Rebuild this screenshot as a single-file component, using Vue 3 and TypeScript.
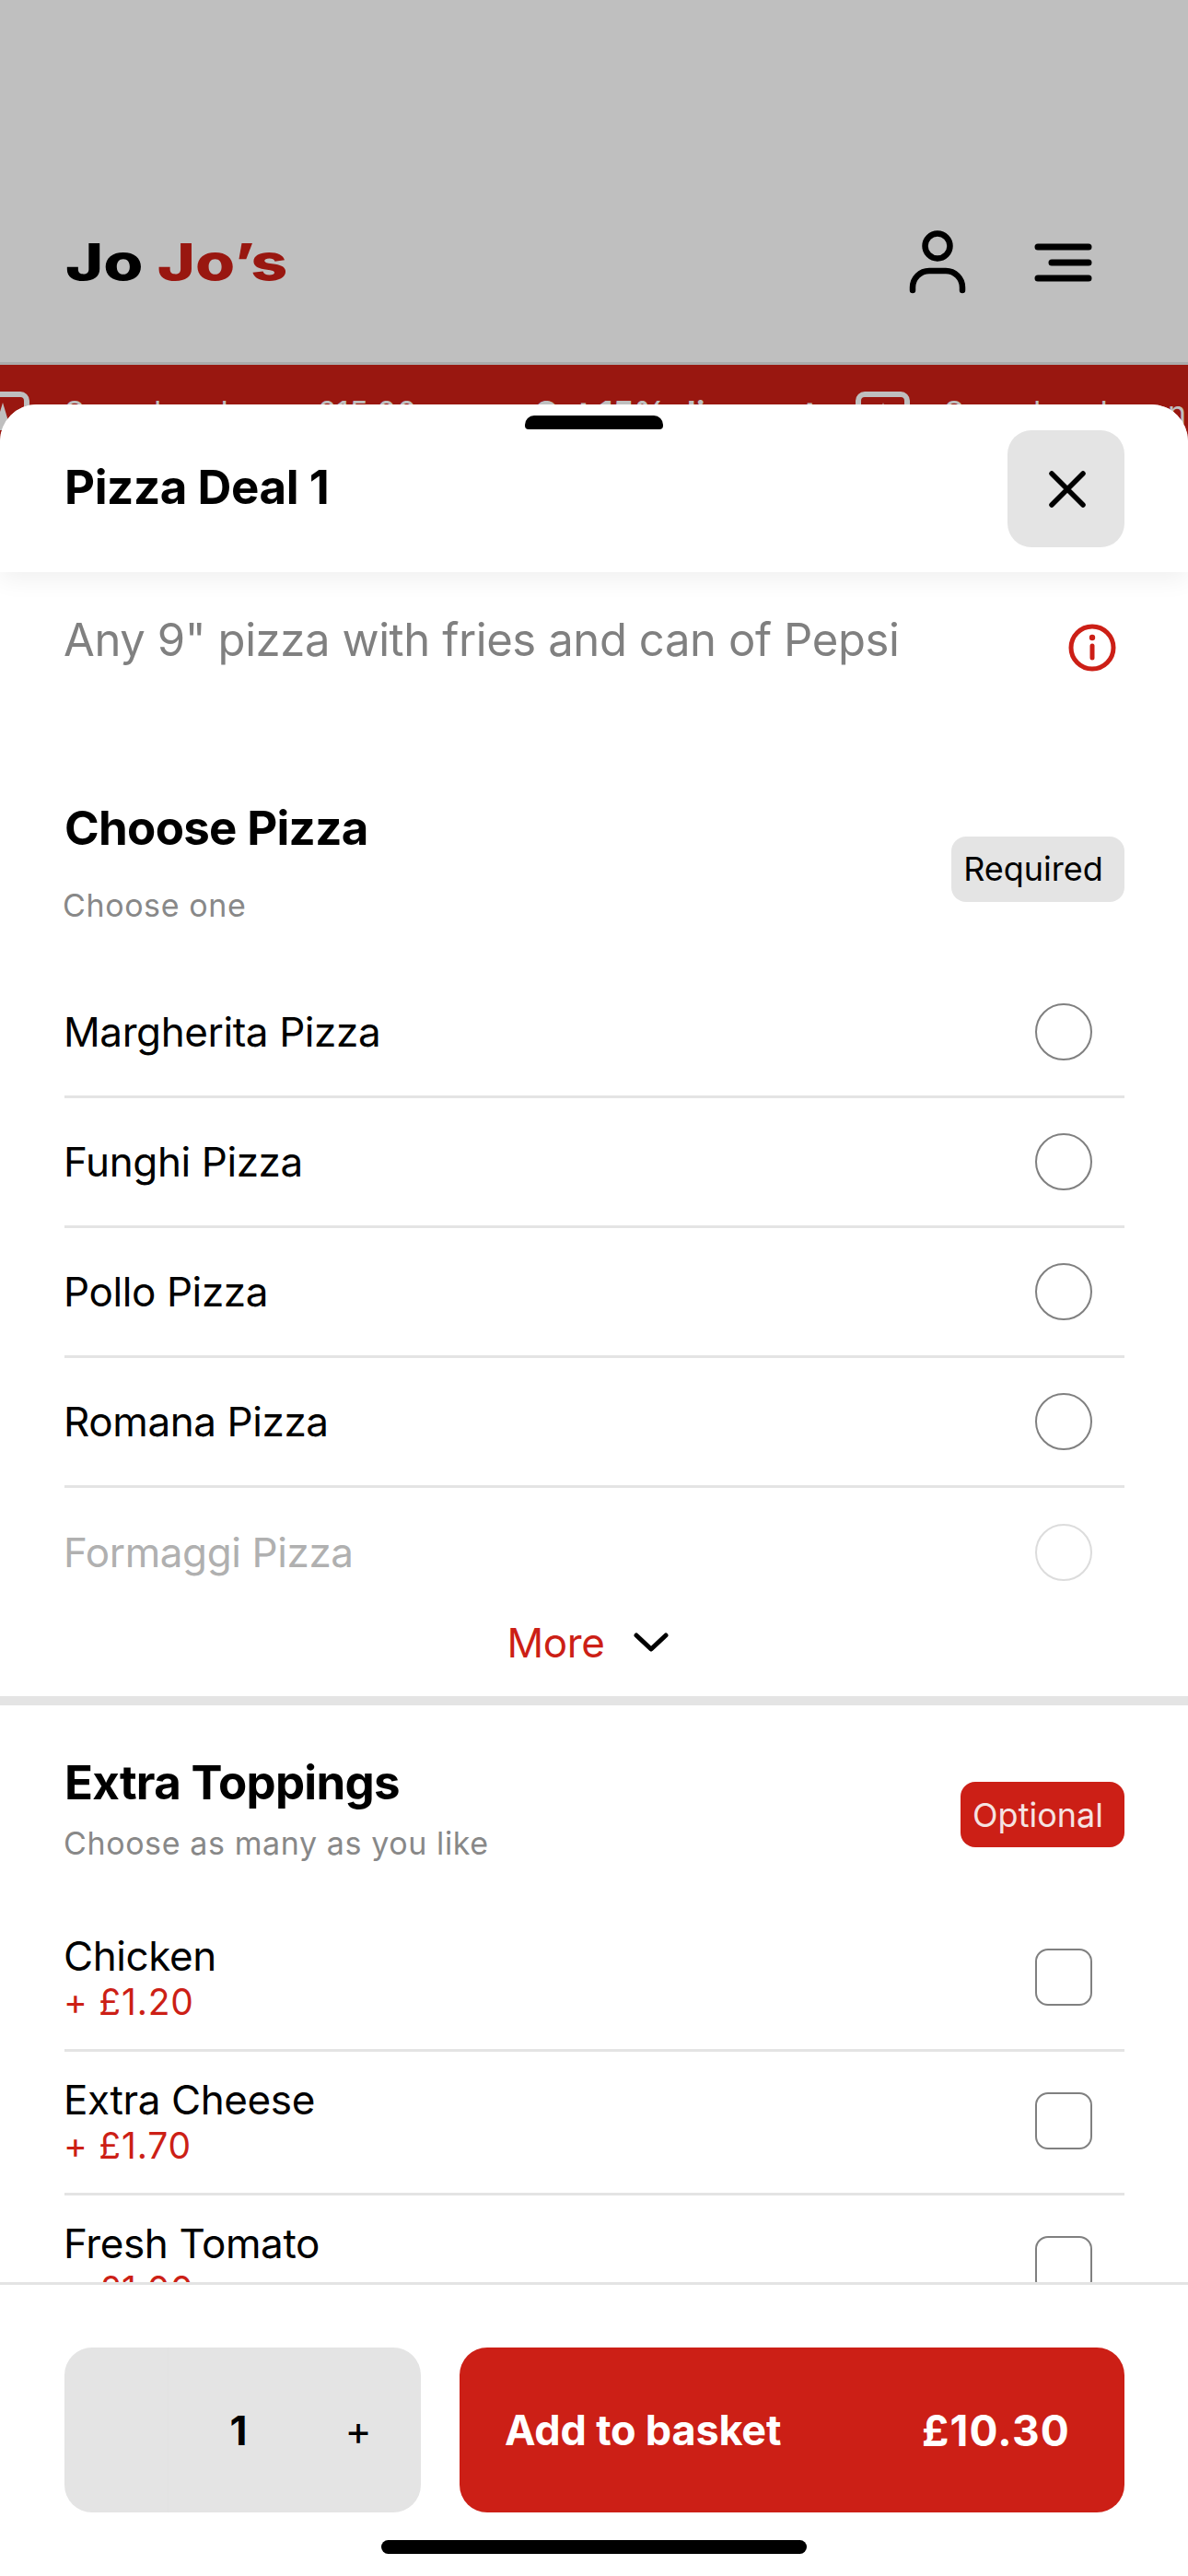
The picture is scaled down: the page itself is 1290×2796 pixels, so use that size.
<script setup lang="ts">
interface Option {
  name: string;
  price?: string;
}

const pizzas: Option[] = [
  { name: 'Margherita Pizza' },
  { name: 'Funghi Pizza' },
  { name: 'Pollo Pizza' },
  { name: 'Romana Pizza' },
];

const toppings: Option[] = [
  { name: 'Chicken', price: '+ £1.20' },
  { name: 'Extra Cheese', price: '+ £1.70' },
  { name: 'Fresh Tomato', price: '+ £1.00' },
];
</script>

<template>
  <div class="screen">
    <header class="topbar">
      <div class="logo"><span>Jo</span> <span class="logo-red">Jo’s</span></div>
      <div class="topbar-icons">
        <svg class="icon-person" viewBox="0 0 62 70" fill="none" stroke="#000" stroke-width="6.5" stroke-linecap="round">
          <circle cx="31" cy="17" r="13.5" />
          <path d="M4 65v-3a18 18 0 0 1 18-18h18a18 18 0 0 1 18 18v3" />
        </svg>
        <svg class="icon-menu" viewBox="0 0 66 44" fill="none" stroke="#000" stroke-width="7" stroke-linecap="round">
          <path d="M5 5h55M20 22h40M5 39h55" />
        </svg>
      </div>
    </header>

    <div class="banner">
      <div class="banner-box banner-box-first">
        <svg width="30" height="30" viewBox="0 0 30 30" fill="#fff"><path d="M15 0l9 30H6z" /></svg>
      </div>
      <span class="banner-text">Spend under on £15.00</span>
      <span class="banner-text banner-bold">Get 15% discount</span>
      <div class="banner-box">
        <svg width="30" height="30" viewBox="0 0 30 30" fill="#fff"><path d="M15 0l9 30H6z" /></svg>
      </div>
      <span class="banner-text">Spend under on £15.00</span>
    </div>

    <div class="dim"></div>

    <section class="sheet">
      <div class="handle"></div>
      <div class="sheet-head">
        <h1 class="sheet-title">Pizza Deal 1</h1>
        <button class="close-btn">
          <svg width="46" height="46" viewBox="0 0 46 46" fill="none" stroke="#000" stroke-width="5.5" stroke-linecap="round">
            <path d="M6 6l34 34M40 6L6 40" />
          </svg>
        </button>
      </div>

      <div class="sheet-body">
        <div class="desc">
          <p class="desc-text">Any 9" pizza with fries and can of Pepsi</p>
          <svg class="info" viewBox="0 0 52 52" fill="none" stroke="#cc1f16" stroke-width="5">
            <circle cx="26" cy="26" r="23" />
            <path d="M26 24v13" stroke-width="5" stroke-linecap="round" />
            <circle cx="26" cy="15" r="3.2" fill="#cc1f16" stroke="none" />
          </svg>
        </div>

        <div class="group-head group-head-pizza">
          <div>
            <h2 class="group-title">Choose Pizza</h2>
            <div class="group-sub sub-pizza">Choose one</div>
          </div>
          <span class="tag tag-grey">Required</span>
        </div>

        <div v-for="p in pizzas" :key="p.name" class="row">
          <span class="row-name">{{ p.name }}</span>
          <span class="radio"></span>
        </div>
        <div class="row row-faded">
          <span class="row-name">Formaggi Pizza</span>
          <span class="radio"></span>
        </div>

        <div class="more">
          <span class="more-label">More</span>
          <svg width="42" height="26" viewBox="0 0 42 26" fill="none" stroke="#000" stroke-width="5" stroke-linecap="round" stroke-linejoin="round">
            <path d="M5 5l16 15L37 5" />
          </svg>
        </div>

        <div class="group-rule"></div>

        <div class="group-head group-head-extra">
          <div>
            <h2 class="group-title">Extra Toppings</h2>
            <div class="group-sub sub-extra">Choose as many as you like</div>
          </div>
          <span class="tag tag-red">Optional</span>
        </div>

        <div v-for="t in toppings" :key="t.name" class="row row-priced">
          <div>
            <div class="row-name">{{ t.name }}</div>
            <div class="row-price">{{ t.price }}</div>
          </div>
          <span class="check"></span>
        </div>
      </div>

      <footer class="sheet-foot">
        <div class="stepper">
          <button class="step-cell step-minus"></button>
          <span class="step-count">1</span>
          <button class="step-cell step-plus">+</button>
        </div>
        <button class="add-btn">
          <span>Add to basket</span>
          <span class="add-price">£10.30</span>
        </button>
      </footer>
      <div class="home-bar"></div>
    </section>
  </div>
</template>

<style scoped>
.screen {
  position: relative;
  width: 1290px;
  height: 2796px;
  overflow: hidden;
  background: #fff;
  font-family: Inter, "Liberation Sans", sans-serif;
  color: #000;
}

.topbar {
  display: flex;
  align-items: center;
  justify-content: space-between;
  height: 396px;
  box-sizing: border-box;
  padding: 176px 102px 0 71px;
  border-bottom: 3px solid #e4e4e4;
  background: #fff;
}

.logo {
  font-family: Inter, "Liberation Sans", sans-serif;
  font-weight: 800;
  font-size: 55px;
  line-height: 1;
  white-space: nowrap;
  transform: scaleX(1.27);
  transform-origin: left center;
}

.logo-red {
  color: #cc1f16;
}

.topbar-icons {
  display: flex;
  align-items: center;
  gap: 73px;
}

.icon-person {
  width: 62px;
  height: 70px;
  overflow: visible;
}

.icon-menu {
  width: 66px;
  height: 44px;
}

.banner {
  display: flex;
  align-items: flex-start;
  height: 120px;
  padding-top: 29px;
  background: #cc1f16;
  color: #fff;
  white-space: nowrap;
  overflow: hidden;
}

.banner-box {
  flex: none;
  display: flex;
  justify-content: center;
  padding-top: 6px;
  box-sizing: border-box;
  width: 59px;
  height: 60px;
  border: 6px solid #fff;
  border-radius: 10px;
  margin-left: 39px;
  margin-right: 37px;
}

.banner-box-first {
  margin-left: -27px;
  margin-right: 38px;
}

.banner-text {
  flex: none;
  font-size: 34px;
  line-height: 56px;
  width: 372px;
  margin-top: -5px;
  letter-spacing: 0.5px;
}

.banner-bold {
  font-size: 35px;
  font-weight: 700;
  margin-left: 138px;
  width: 310px;
}

.dim {
  position: absolute;
  inset: 0;
  background: rgba(0, 0, 0, 0.25);
}

.sheet {
  position: absolute;
  left: 0;
  right: 0;
  top: 439px;
  bottom: 0;
  display: flex;
  flex-direction: column;
  background: #fff;
  border-radius: 40px 40px 0 0;
  overflow: hidden;
}

.handle {
  position: absolute;
  z-index: 3;
  left: 570px;
  top: 12px;
  width: 150px;
  height: 15px;
  background: #000;
  border-radius: 10px 10px 4px 4px;
}

.sheet-head {
  position: relative;
  z-index: 2;
  flex: none;
  display: flex;
  align-items: center;
  justify-content: space-between;
  height: 182px;
  box-sizing: border-box;
  padding: 28px 69px 27px 70px;
  background: #fff;
  box-shadow: 0 6px 26px rgba(0, 0, 0, 0.07);
}

.sheet-title {
  margin: -3px 0 0;
  font-size: 51px;
  line-height: 60px;
  font-weight: 700;
  letter-spacing: -0.4px;
}

.close-btn {
  display: flex;
  align-items: center;
  justify-content: center;
  width: 127px;
  height: 127px;
  padding: 0 0 0 3px;
  border: none;
  border-radius: 26px;
  background: #e4e4e4;
}

.sheet-body {
  flex: 1;
  min-height: 0;
  overflow: hidden;
}

.desc {
  display: flex;
  justify-content: space-between;
  padding: 44px 78px 0 70px;
  height: 176px;
  box-sizing: border-box;
}

.desc-text {
  margin: 0 0 0 -1px;
  font-size: 49px;
  line-height: 60px;
  letter-spacing: -0.4px;
  color: #808080;
}

.info {
  width: 52px;
  height: 52px;
  margin-top: 12px;
}

.group-head {
  display: flex;
  justify-content: space-between;
  align-items: center;
  box-sizing: border-box;
  padding: 0 69px 0 70px;
}

.group-head-pizza {
  height: 254px;
  padding-top: 26px;
}

.group-head-pizza .tag {
  margin-top: 12px;
}

.group-head-extra {
  height: 220px;
  padding-top: 5px;
}

.group-head-extra .tag {
  margin-top: 12px;
}

.group-title {
  margin: 0;
  font-size: 51px;
  line-height: 60px;
  font-weight: 700;
  letter-spacing: -0.7px;
}

.group-sub {
  font-size: 34px;
  line-height: 44px;
  color: #888;
  letter-spacing: 0.6px;
}

.sub-pizza {
  margin-top: 32px;
  margin-left: -2px;
}

.sub-extra {
  margin-top: 14px;
  margin-left: -1px;
}

.tag {
  display: flex;
  align-items: center;
  justify-content: center;
  box-sizing: border-box;
  height: 71px;
  padding-right: 10px;
  border-radius: 16px;
  font-size: 36px;
}

.tag-grey {
  width: 188px;
  background: #e4e4e4;
}

.tag-red {
  width: 178px;
  background: #cc1f16;
  color: #f5e3e2;
}

.row {
  display: flex;
  align-items: center;
  justify-content: space-between;
  height: 141px;
  box-sizing: border-box;
  margin: 0 69px 0 70px;
  padding-right: 35px;
  border-bottom: 3px solid #e4e4e4;
}

.row-name {
  margin-left: -1px;
  font-size: 44px;
  line-height: 52px;
  letter-spacing: -0.4px;
}

.radio {
  flex: none;
  box-sizing: border-box;
  width: 62px;
  height: 62px;
  border: 2px solid #808080;
  border-radius: 50%;
}

.row-faded {
  border-bottom: none;
  height: 140px;
}

.row-faded .row-name {
  color: #b0b0b0;
}

.row-faded .radio {
  border-color: #dcdcdc;
}

.more {
  display: flex;
  align-items: center;
  justify-content: center;
  gap: 29px;
  height: 84px;
  margin-top: -14px;
  margin-left: -12px;
}

.more-label {
  font-size: 44px;
  line-height: 56px;
  letter-spacing: -0.4px;
  color: #cc1f16;
}

.group-rule {
  height: 10px;
  margin-top: 16px;
  background: #e4e4e4;
}

.row-priced {
  height: 156px;
}

.row-priced .row-name {
  display: block;
  line-height: 50px;
}

.row-price {
  margin-left: -1px;
  font-size: 39px;
  line-height: 50px;
  color: #cc1f16;
  letter-spacing: 0.8px;
}

.check {
  flex: none;
  box-sizing: border-box;
  width: 62px;
  height: 62px;
  margin-top: -4px;
  border: 2px solid #808080;
  border-radius: 14px;
  background: #fff;
}

.sheet-foot {
  position: relative;
  flex: none;
  display: flex;
  gap: 42px;
  height: 319px;
  box-sizing: border-box;
  padding: 68px 69px 0 70px;
  border-top: 3px solid #e4e4e4;
  background: #fff;
}

.stepper {
  display: flex;
  align-items: center;
  width: 387px;
  height: 179px;
  border-radius: 30px;
  background: #e4e4e4;
  overflow: hidden;
}

.step-cell {
  padding: 0;
  border: none;
  background: none;
  color: #000;
  font-family: inherit;
}

.step-minus {
  width: 113px;
  height: 100%;
  border-right: 1px solid #e2e2e2;
}

.step-count {
  width: 126px;
  margin-left: 13px;
  text-align: center;
  font-size: 44px;
  font-weight: 700;
}

.step-plus {
  width: 50px;
  margin-left: 42px;
  font-size: 44px;
  line-height: 50px;
  text-align: center;
}

.add-btn {
  flex: 1;
  display: flex;
  align-items: center;
  justify-content: space-between;
  height: 179px;
  padding: 0 59px 0 49px;
  border: none;
  border-radius: 30px;
  background: #cc1f16;
  color: #fff;
  font-family: inherit;
  font-size: 45px;
  font-weight: 700;
  letter-spacing: -0.2px;
}

.add-price {
  font-size: 46px;
  letter-spacing: 1.2px;
}

.home-bar {
  position: absolute;
  left: 414px;
  bottom: 24px;
  width: 462px;
  height: 15px;
  border-radius: 8px;
  background: #000;
}
</style>
